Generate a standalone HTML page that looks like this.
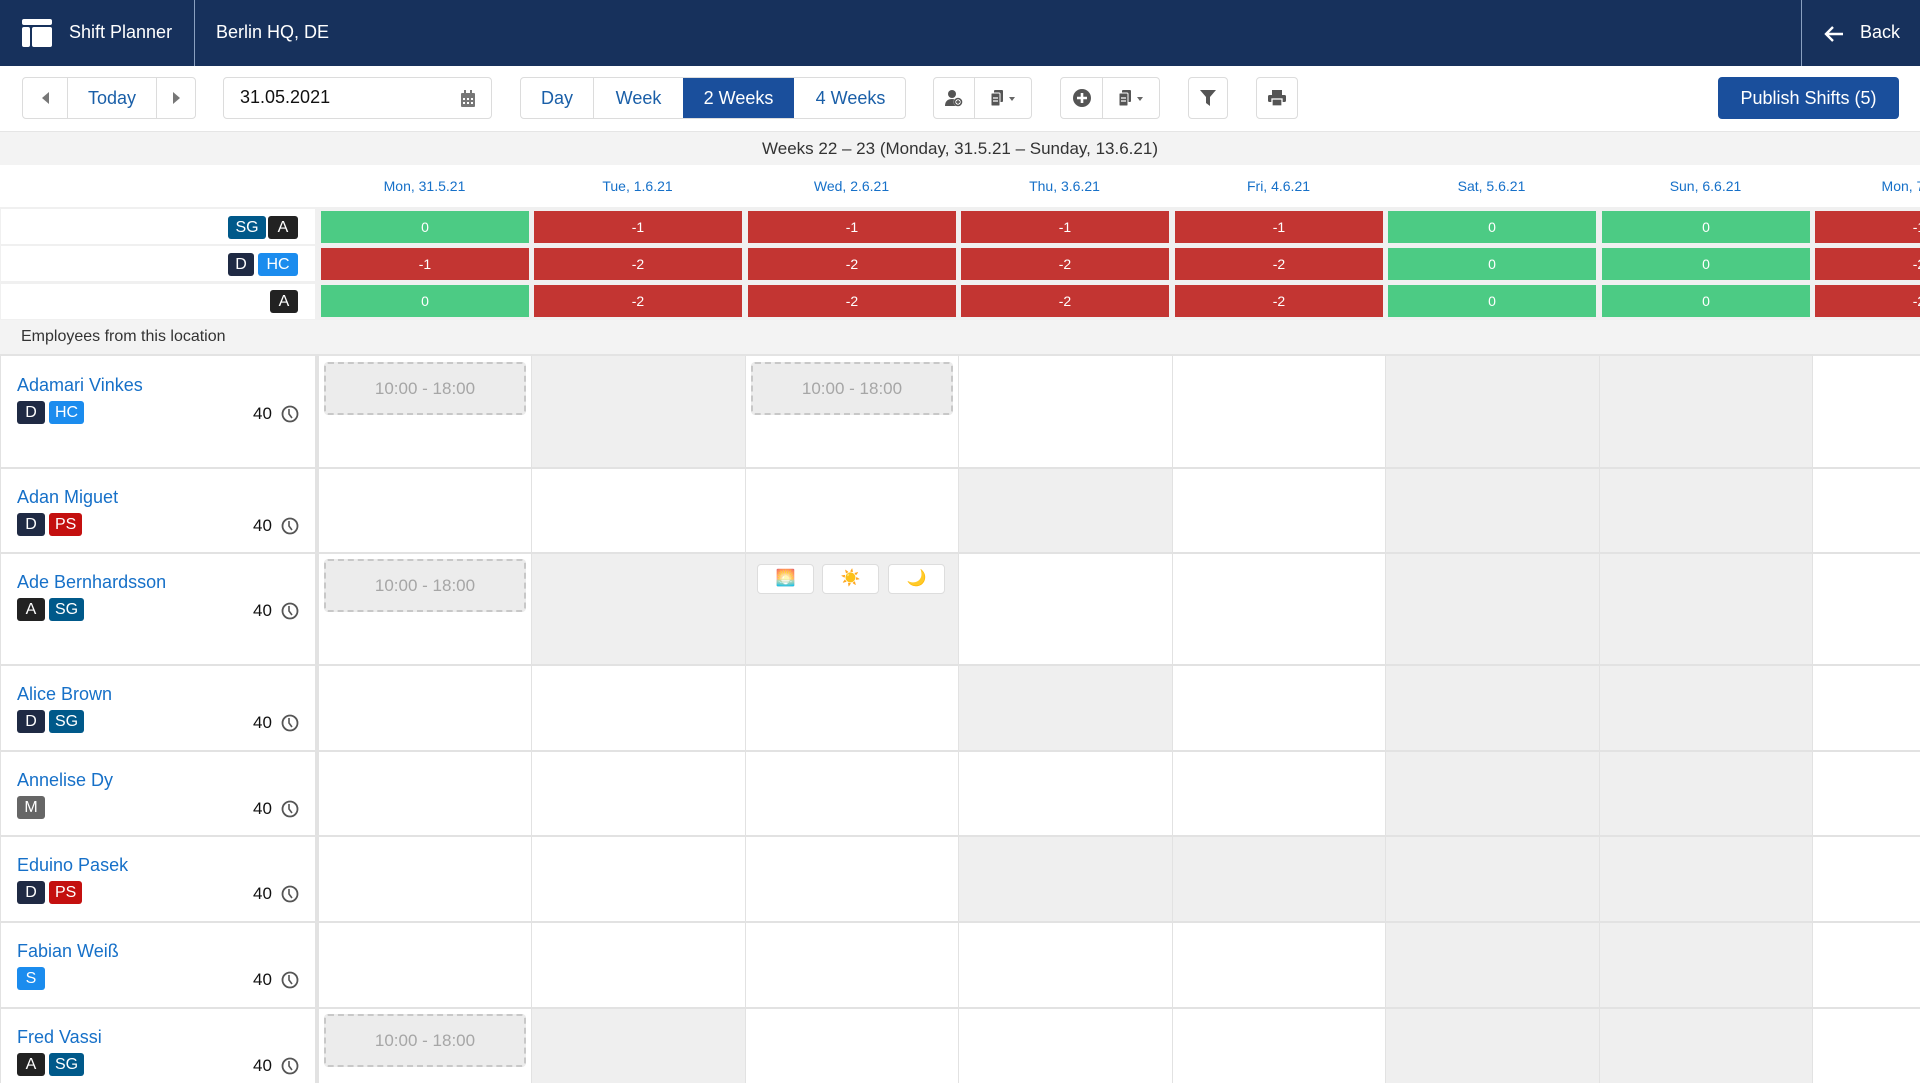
<!DOCTYPE html>
<html><head><meta charset="utf-8"><style>
*{box-sizing:border-box;margin:0;padding:0}
body{width:1920px;height:1083px;overflow:hidden;background:#fff;font-family:"Liberation Sans",sans-serif;position:relative;color:#222}
.a{position:absolute}
.hdr{left:0;top:0;width:1920px;height:66px;background:#17315c;color:#fff;font-size:18px}
.btn{position:absolute;border:1px solid #dcdcdc;border-radius:4px;background:#fff;height:42px;top:77px}
.seg{position:absolute;top:0;height:40px;display:flex;align-items:center;justify-content:center;font-size:18px;color:#1a5fa8}
.bd{display:inline-block;height:23px;line-height:23px;padding:0 6px;border-radius:3px;color:#fff;font-size:16px;margin-right:4px;min-width:28px;text-align:center}
.D{background:#1f2a44}.SG{background:#00598a}.A{background:#222}.HC{background:#1b8cee}.PS{background:#c4100f}.M{background:#666}.S{background:#1b8cee}
.sc{position:absolute;height:32px;line-height:32px;text-align:center;color:#fff;font-size:14px;width:208px}
.g{background:#4ccb84}.r{background:#c33532}
.dh{position:absolute;top:178px;width:213px;text-align:center;color:#1670c8;font-size:14px}
.name{position:absolute;left:17px;color:#1670c8;font-size:18px}
.badges{position:absolute;left:17px}
.hrs{position:absolute;left:253px;font-size:17px;color:#111}
.grey{position:absolute;background:#efefef}
.shift{position:absolute;width:202px;height:53px;border:2px dashed #c8c8c8;border-radius:4px;background:#ececec;color:#a6a6a6;font-size:17px;text-align:center;line-height:49px}
.emo{position:absolute;top:564px;width:57px;height:30px;border:1px solid #ddd;border-radius:4px;background:#fff;text-align:center;font-size:16px;line-height:28px}
</style></head><body>
<div class="a hdr">
 <svg class="a" style="left:22px;top:19px" width="30" height="28" viewBox="0 0 30 28"><rect x="0" y="0" width="30" height="6" rx="2" fill="#fff"/><rect x="0" y="8" width="8" height="20" rx="2" fill="#fff"/><rect x="10" y="8" width="20" height="20" rx="2" fill="#fff"/></svg>
 <div class="a" style="left:69px;top:22px">Shift Planner</div>
 <div class="a" style="left:194px;top:0;width:1px;height:66px;background:#8aa0c0"></div>
 <div class="a" style="left:216px;top:22px">Berlin HQ, DE</div>
 <div class="a" style="left:1801px;top:0;width:1px;height:66px;background:#8aa0c0"></div>
 <svg class="a" style="left:1824px;top:26px" width="20" height="16" viewBox="0 0 20 16"><path d="M9 1L2 8l7 7M2 8h17" stroke="#fff" stroke-width="2.4" fill="none"/></svg>
 <div class="a" style="left:1860px;top:22px">Back</div>
</div>
<div class="btn" style="left:22px;width:174px">
 <div class="seg" style="left:0;width:45px;border-right:1px solid #dcdcdc"><svg width="10" height="14"><path d="M9 1L2 7l7 6z" fill="#777"/></svg></div>
 <div class="seg" style="left:45px;width:89px;border-right:1px solid #dcdcdc">Today</div>
 <div class="seg" style="left:134px;width:39px"><svg width="10" height="14"><path d="M1 1l7 6-7 6z" fill="#777"/></svg></div>
</div>
<div class="btn" style="left:223px;width:269px"><div class="a" style="left:16px;top:9px;font-size:18px;color:#111">31.05.2021</div>
 <svg class="a" style="left:236px;top:12px" width="16" height="18" viewBox="0 0 16 18"><rect x="1" y="3" width="14" height="14" rx="1" fill="#777"/><rect x="4" y="0" width="2" height="4" fill="#777"/><rect x="10" y="0" width="2" height="4" fill="#777"/><g fill="#fff"><rect x="3" y="8" width="2" height="2"/><rect x="7" y="8" width="2" height="2"/><rect x="11" y="8" width="2" height="2"/><rect x="3" y="12" width="2" height="2"/><rect x="7" y="12" width="2" height="2"/><rect x="11" y="12" width="2" height="2"/></g></svg></div>
<div class="btn" style="left:520px;width:386px;overflow:hidden">
 <div class="seg" style="left:0;width:73px;border-right:1px solid #dcdcdc">Day</div>
 <div class="seg" style="left:73px;width:89px">Week</div>
 <div class="seg" style="left:162px;width:111px;background:#1a4f9c;color:#fff">2 Weeks</div>
 <div class="seg" style="left:273px;width:113px">4 Weeks</div>
</div>
<div class="btn" style="left:933px;width:99px">
 <div class="seg" style="left:0;width:41px;border-right:1px solid #dcdcdc"><svg width="18" height="18" viewBox="0 0 18 18"><circle cx="7" cy="5" r="4" fill="#555"/><path d="M0 17c0-5 3-7 7-7s5 2 5 3v4z" fill="#555"/><circle cx="13" cy="13" r="4.5" fill="#fff"/><circle cx="13" cy="13" r="3.5" fill="none" stroke="#555" stroke-width="1.6"/><path d="M13 11v4M11 13h4" stroke="#555" stroke-width="1.4"/></svg></div>
 <div class="seg" style="left:41px;width:57px"><svg width="26" height="16" viewBox="0 0 26 16"><rect x="3" y="0" width="9" height="12" rx="1" fill="#555"/><rect x="0" y="3" width="9" height="13" rx="1" fill="#555" stroke="#fff" stroke-width="1"/><path d="M2 8h5M2 11h5" stroke="#fff" stroke-width="1.2"/><path d="M18 7h6l-3 4z" fill="#666"/></svg></div>
</div>
<div class="btn" style="left:1060px;width:100px">
 <div class="seg" style="left:0;width:42px;border-right:1px solid #dcdcdc"><svg width="18" height="18"><circle cx="9" cy="9" r="9" fill="#555"/><path d="M9 4v10M4 9h10" stroke="#fff" stroke-width="2.6"/></svg></div>
 <div class="seg" style="left:42px;width:57px"><svg width="26" height="16" viewBox="0 0 26 16"><rect x="3" y="0" width="9" height="12" rx="1" fill="#555"/><rect x="0" y="3" width="9" height="13" rx="1" fill="#555" stroke="#fff" stroke-width="1"/><path d="M2 8h5M2 11h5" stroke="#fff" stroke-width="1.2"/><path d="M18 7h6l-3 4z" fill="#666"/></svg></div>
</div>
<div class="btn" style="left:1188px;width:40px"><div class="seg" style="left:0;width:38px"><svg width="16" height="18"><path d="M0 1h16l-6 7v9l-4-3V8z" fill="#555"/></svg></div></div>
<div class="btn" style="left:1256px;width:42px"><div class="seg" style="left:0;width:40px"><svg width="18" height="18" viewBox="0 0 18 18"><rect x="4" y="1" width="10" height="5" fill="#555"/><rect x="0" y="6" width="18" height="7" rx="1.5" fill="#555"/><rect x="4" y="10" width="10" height="7" fill="#555" stroke="#fff" stroke-width="1.3"/></svg></div></div>
<div class="a" style="left:1718px;top:77px;width:181px;height:42px;background:#1a4f9c;border-radius:4px;color:#fff;font-size:18px;text-align:center;line-height:42px">Publish Shifts (5)</div>

<div class="a" style="left:0;top:131px;width:1920px;height:34px;background:#f3f3f3;border-top:1px solid #e5e5e5;text-align:center;font-size:17px;line-height:34px;color:#333">Weeks 22 – 23 (Monday, 31.5.21 – Sunday, 13.6.21)</div>
<div class="dh" style="left:318px">Mon, 31.5.21</div><div class="dh" style="left:531px">Tue, 1.6.21</div><div class="dh" style="left:745px">Wed, 2.6.21</div><div class="dh" style="left:958px">Thu, 3.6.21</div><div class="dh" style="left:1172px">Fri, 4.6.21</div><div class="dh" style="left:1385px">Sat, 5.6.21</div><div class="dh" style="left:1599px">Sun, 6.6.21</div><div class="dh" style="left:1812px">Mon, 7.6.21</div>

<div class="a" style="left:0;top:207px;width:1920px;height:113px;background:#f0f0f0"></div>
<div class="a" style="left:1px;top:209px;width:314px;height:35px;background:#fff"></div>
<div class="a" style="left:1px;top:246px;width:314px;height:35px;background:#fff"></div>
<div class="a" style="left:1px;top:284px;width:314px;height:35px;background:#fff"></div>
<div class="a bd SG" style="left:228px;top:216px;width:38px;padding:0">SG</div><div class="a bd A" style="left:268px;top:216px;width:30px;min-width:0;padding:0">A</div>
<div class="a bd D" style="left:228px;top:253px;width:26px;min-width:0;padding:0">D</div><div class="a bd HC" style="left:258px;top:253px;width:40px;padding:0">HC</div>
<div class="a bd A" style="left:270px;top:290px;width:28px;min-width:0;padding:0">A</div>

<div class="sc g" style="left:321px;top:211px">0</div><div class="sc r" style="left:534px;top:211px">-1</div><div class="sc r" style="left:748px;top:211px">-1</div><div class="sc r" style="left:961px;top:211px">-1</div><div class="sc r" style="left:1175px;top:211px">-1</div><div class="sc g" style="left:1388px;top:211px">0</div><div class="sc g" style="left:1602px;top:211px">0</div><div class="sc r" style="left:1815px;top:211px">-1</div>
<div class="sc r" style="left:321px;top:248px">-1</div><div class="sc r" style="left:534px;top:248px">-2</div><div class="sc r" style="left:748px;top:248px">-2</div><div class="sc r" style="left:961px;top:248px">-2</div><div class="sc r" style="left:1175px;top:248px">-2</div><div class="sc g" style="left:1388px;top:248px">0</div><div class="sc g" style="left:1602px;top:248px">0</div><div class="sc r" style="left:1815px;top:248px">-2</div>
<div class="sc g" style="left:321px;top:285px">0</div><div class="sc r" style="left:534px;top:285px">-2</div><div class="sc r" style="left:748px;top:285px">-2</div><div class="sc r" style="left:961px;top:285px">-2</div><div class="sc r" style="left:1175px;top:285px">-2</div><div class="sc g" style="left:1388px;top:285px">0</div><div class="sc g" style="left:1602px;top:285px">0</div><div class="sc r" style="left:1815px;top:285px">-2</div>

<div class="a" style="left:0;top:320px;width:1920px;height:36px;background:#f3f3f3;border-bottom:2px solid #e3e3e3"></div>
<div class="a" style="left:21px;top:328px;font-size:16px;color:#333">Employees from this location</div>

<div class="grey" style="left:531px;top:356px;width:214px;height:112px"></div>
<div class="grey" style="left:958px;top:468px;width:214px;height:85px"></div>
<div class="grey" style="left:531px;top:553px;width:428px;height:112px"></div>
<div class="grey" style="left:958px;top:665px;width:214px;height:86px"></div>
<div class="grey" style="left:958px;top:836px;width:428px;height:86px"></div>
<div class="grey" style="left:531px;top:1008px;width:214px;height:75px"></div>
<div class="grey" style="left:1385px;top:356px;width:427px;height:727px"></div>
<div class="a" style="left:315px;top:356px;width:4px;height:727px;background:#e2e2e2"></div>
<div class="a" style="left:531px;top:356px;width:1px;height:727px;background:#e2e2e2"></div>
<div class="a" style="left:745px;top:356px;width:1px;height:727px;background:#e2e2e2"></div>
<div class="a" style="left:958px;top:356px;width:1px;height:727px;background:#e2e2e2"></div>
<div class="a" style="left:1172px;top:356px;width:1px;height:727px;background:#e2e2e2"></div>
<div class="a" style="left:1385px;top:356px;width:1px;height:727px;background:#e2e2e2"></div>
<div class="a" style="left:1599px;top:356px;width:1px;height:727px;background:#e2e2e2"></div>
<div class="a" style="left:1812px;top:356px;width:1px;height:727px;background:#e2e2e2"></div>
<div class="a" style="left:0;top:467px;width:1920px;height:2px;background:#e2e2e2"></div>
<div class="a" style="left:0;top:552px;width:1920px;height:2px;background:#e2e2e2"></div>
<div class="a" style="left:0;top:664px;width:1920px;height:2px;background:#e2e2e2"></div>
<div class="a" style="left:0;top:750px;width:1920px;height:2px;background:#e2e2e2"></div>
<div class="a" style="left:0;top:835px;width:1920px;height:2px;background:#e2e2e2"></div>
<div class="a" style="left:0;top:921px;width:1920px;height:2px;background:#e2e2e2"></div>
<div class="a" style="left:0;top:1007px;width:1920px;height:2px;background:#e2e2e2"></div>
<div class="a" style="left:0;top:356px;width:1px;height:727px;background:#e2e2e2"></div>

<div class="shift" style="left:324px;top:362px">10:00 - 18:00</div>
<div class="shift" style="left:751px;top:362px">10:00 - 18:00</div>
<div class="shift" style="left:324px;top:559px">10:00 - 18:00</div>
<div class="shift" style="left:324px;top:1014px">10:00 - 18:00</div>
<div class="emo" style="left:757px">🌅</div><div class="emo" style="left:822px">☀️</div><div class="emo" style="left:888px">🌙</div>

<div class="name" style="top:375px">Adamari Vinkes</div><div class="badges" style="top:401px"><span class="bd D">D</span><span class="bd HC">HC</span></div>
<div class="name" style="top:487px">Adan Miguet</div><div class="badges" style="top:513px"><span class="bd D">D</span><span class="bd PS">PS</span></div>
<div class="name" style="top:572px">Ade Bernhardsson</div><div class="badges" style="top:598px"><span class="bd A">A</span><span class="bd SG">SG</span></div>
<div class="name" style="top:684px">Alice Brown</div><div class="badges" style="top:710px"><span class="bd D">D</span><span class="bd SG">SG</span></div>
<div class="name" style="top:770px">Annelise Dy</div><div class="badges" style="top:796px"><span class="bd M">M</span></div>
<div class="name" style="top:855px">Eduino Pasek</div><div class="badges" style="top:881px"><span class="bd D">D</span><span class="bd PS">PS</span></div>
<div class="name" style="top:941px">Fabian Weiß</div><div class="badges" style="top:967px"><span class="bd S">S</span></div>
<div class="name" style="top:1027px">Fred Vassi</div><div class="badges" style="top:1053px"><span class="bd A">A</span><span class="bd SG">SG</span></div>

<div class="hrs" style="top:404px">40</div><div class="hrs" style="top:516px">40</div><div class="hrs" style="top:601px">40</div><div class="hrs" style="top:713px">40</div><div class="hrs" style="top:799px">40</div><div class="hrs" style="top:884px">40</div><div class="hrs" style="top:970px">40</div><div class="hrs" style="top:1056px">40</div>
<svg class="a" style="left:281px;top:405px" width="18" height="18"><circle cx="9" cy="9" r="7.5" fill="none" stroke="#555" stroke-width="1.8"/><path d="M8 4v5l3 4" stroke="#555" stroke-width="1.6" fill="none"/></svg>
<svg class="a" style="left:281px;top:517px" width="18" height="18"><circle cx="9" cy="9" r="7.5" fill="none" stroke="#555" stroke-width="1.8"/><path d="M8 4v5l3 4" stroke="#555" stroke-width="1.6" fill="none"/></svg>
<svg class="a" style="left:281px;top:602px" width="18" height="18"><circle cx="9" cy="9" r="7.5" fill="none" stroke="#555" stroke-width="1.8"/><path d="M8 4v5l3 4" stroke="#555" stroke-width="1.6" fill="none"/></svg>
<svg class="a" style="left:281px;top:714px" width="18" height="18"><circle cx="9" cy="9" r="7.5" fill="none" stroke="#555" stroke-width="1.8"/><path d="M8 4v5l3 4" stroke="#555" stroke-width="1.6" fill="none"/></svg>
<svg class="a" style="left:281px;top:800px" width="18" height="18"><circle cx="9" cy="9" r="7.5" fill="none" stroke="#555" stroke-width="1.8"/><path d="M8 4v5l3 4" stroke="#555" stroke-width="1.6" fill="none"/></svg>
<svg class="a" style="left:281px;top:885px" width="18" height="18"><circle cx="9" cy="9" r="7.5" fill="none" stroke="#555" stroke-width="1.8"/><path d="M8 4v5l3 4" stroke="#555" stroke-width="1.6" fill="none"/></svg>
<svg class="a" style="left:281px;top:971px" width="18" height="18"><circle cx="9" cy="9" r="7.5" fill="none" stroke="#555" stroke-width="1.8"/><path d="M8 4v5l3 4" stroke="#555" stroke-width="1.6" fill="none"/></svg>
<svg class="a" style="left:281px;top:1057px" width="18" height="18"><circle cx="9" cy="9" r="7.5" fill="none" stroke="#555" stroke-width="1.8"/><path d="M8 4v5l3 4" stroke="#555" stroke-width="1.6" fill="none"/></svg>
</body></html>
